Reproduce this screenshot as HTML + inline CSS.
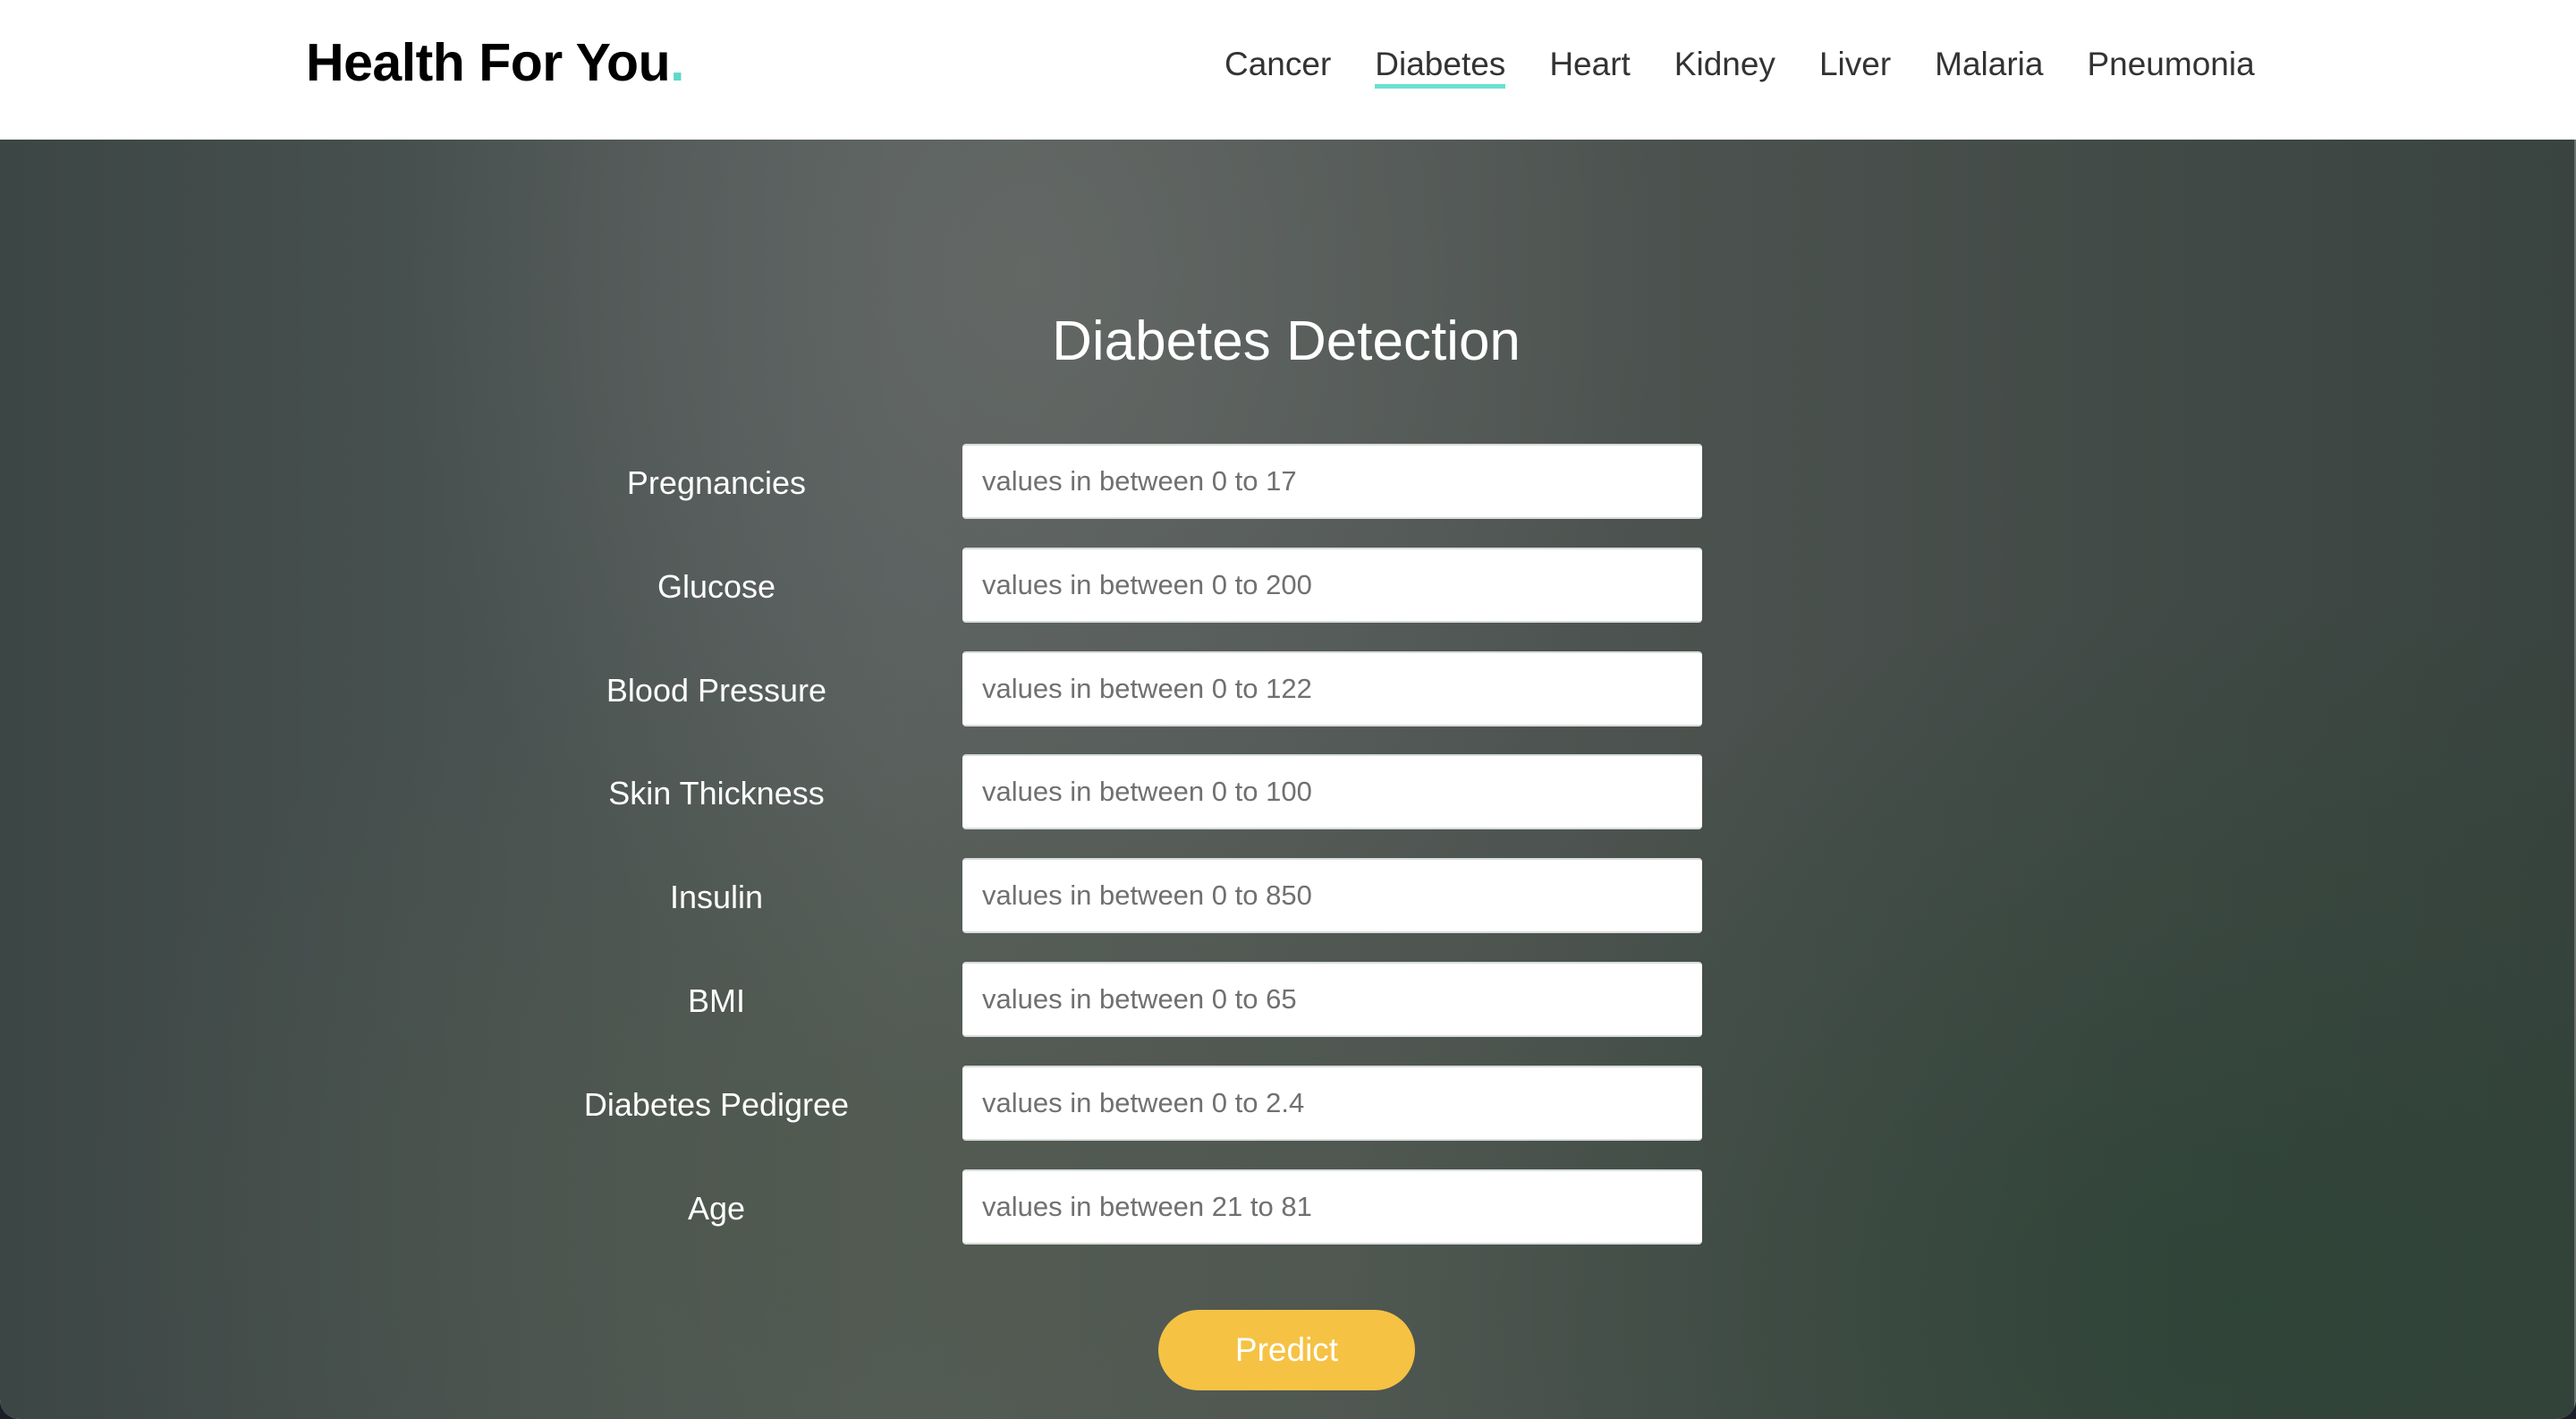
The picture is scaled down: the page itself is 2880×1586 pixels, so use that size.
<!DOCTYPE html>
<html><head><meta charset="utf-8"><style>
*{margin:0;padding:0;box-sizing:border-box}
html,body{width:2880px;height:1586px;overflow:hidden;background:#1a1f2a}
.win{position:absolute;left:0;top:0;width:2880px;height:1586px;border-radius:0 0 22px 22px;overflow:hidden;background:#fff}
header{position:absolute;left:0;top:0;width:2880px;height:156px;background:#fff}
.logo{position:absolute;left:342px;top:34px;font:bold 59px/72px "Liberation Sans",sans-serif;color:#000;letter-spacing:-0.5px}
.logo span{color:#5fd8c6}
nav{position:absolute;left:1369px;top:44px;font:37px/56px "Liberation Sans",sans-serif;color:#333;white-space:nowrap}
nav a{display:inline-block;margin-right:49px;position:relative}
nav a.on:after{content:"";position:absolute;left:0;right:0;top:50px;height:5px;background:#6be0cf}
main{position:absolute;left:0;top:156px;width:2880px;height:1430px;
background:
radial-gradient(ellipse 700px 900px at 1150px 150px,rgba(110,112,108,.6),rgba(110,112,108,0) 100%),
radial-gradient(ellipse 1000px 800px at 2500px 1300px,rgba(40,66,50,.7),rgba(40,66,50,0) 100%),
radial-gradient(ellipse 900px 700px at 1000px 1200px,rgba(80,90,70,.5),rgba(80,90,70,0) 100%),
linear-gradient(90deg,#3c4644 0%,#545c5c 35%,#4e5451 60%,#39433f 100%);
border-right:2px solid #6a7270}
h1{position:absolute;left:0;width:2876px;top:186px;text-align:center;font:normal 62px/80px "Liberation Sans",sans-serif;color:#fff}
.row{position:absolute;left:0;width:2880px;height:84px}
.row label{position:absolute;left:560px;width:482px;text-align:center;top:20px;font:36px/48px "Liberation Sans",sans-serif;color:#fff}
.row .in{position:absolute;left:1076px;width:827px;height:84px;background:#fff;border-radius:4px;border-top:2px solid #d8dcdc;border-bottom:2px solid #d8dcdc;font:31px/80px "Liberation Sans",sans-serif;color:#707070;padding-left:22px}
.btn{position:absolute;left:1295px;top:1308px;width:287px;height:90px;border-radius:45px;background:#f5c244;color:#fff;font:37px/90px "Liberation Sans",sans-serif;text-align:center}
</style></head><body><div class="win">
<header><div class="logo">Health For You<span>.</span></div>
<nav><a>Cancer</a><a class="on">Diabetes</a><a>Heart</a><a>Kidney</a><a>Liver</a><a>Malaria</a><a>Pneumonia</a></nav></header>
<main>
<h1>Diabetes Detection</h1>
<div class="row" style="top:340px"><label>Pregnancies</label><div class="in">values in between 0 to 17</div></div>
<div class="row" style="top:456px"><label>Glucose</label><div class="in">values in between 0 to 200</div></div>
<div class="row" style="top:572px"><label>Blood Pressure</label><div class="in">values in between 0 to 122</div></div>
<div class="row" style="top:687px"><label>Skin Thickness</label><div class="in">values in between 0 to 100</div></div>
<div class="row" style="top:803px"><label>Insulin</label><div class="in">values in between 0 to 850</div></div>
<div class="row" style="top:919px"><label>BMI</label><div class="in">values in between 0 to 65</div></div>
<div class="row" style="top:1035px"><label>Diabetes Pedigree</label><div class="in">values in between 0 to 2.4</div></div>
<div class="row" style="top:1151px"><label>Age</label><div class="in">values in between 21 to 81</div></div>
<div class="btn">Predict</div>
</main></div></body></html>
